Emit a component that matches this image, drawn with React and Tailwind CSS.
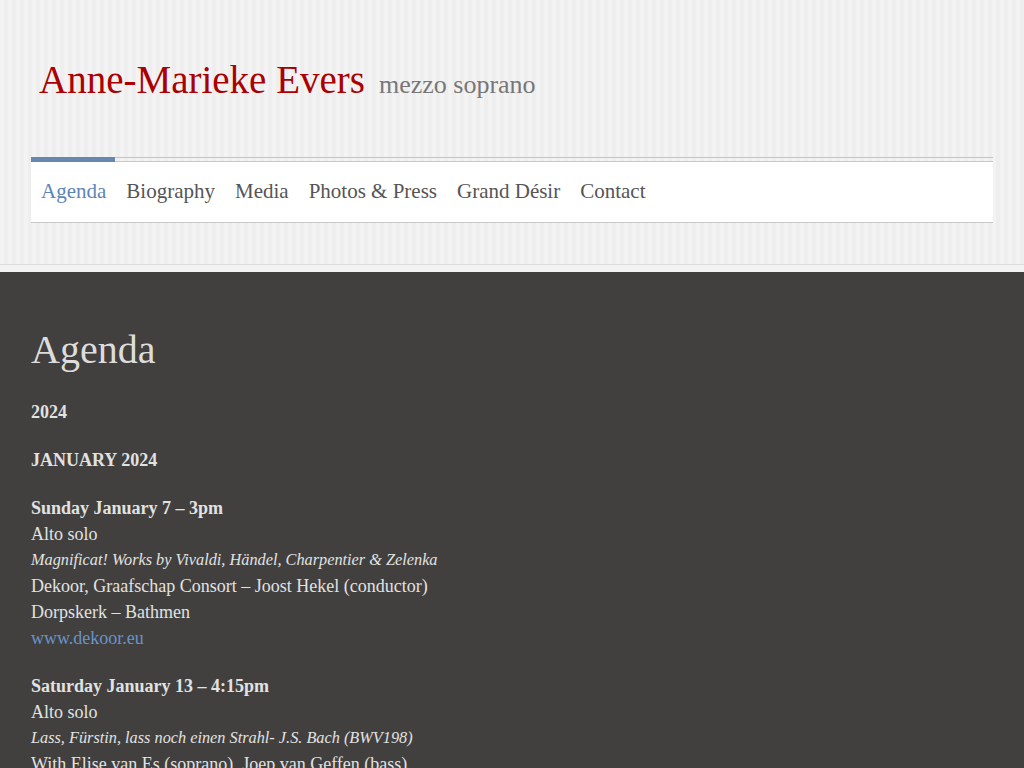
import React from "react";

const serif = { fontFamily: '"Liberation Serif", "Times New Roman", serif' };

function Event({ head, lines }) {
  return (
    <div className="mb-[22px]">
      <div className="font-bold">{head}</div>
      {lines.map((l, i) => (
        <div key={i} className={l.italic ? "italic text-[16.3px]" : l.link ? "text-[#6a93c9]" : ""}>
          {l.t}
        </div>
      ))}
    </div>
  );
}

export default function App() {
  const nav = ["Agenda", "Biography", "Media", "Photos & Press", "Grand Désir", "Contact"];
  return (
    <div className="min-h-[768px] bg-[#41403e]" style={serif}>
      <header className="bg-[repeating-linear-gradient(90deg,#f3f3f3_0px,#f3f3f3_4px,#eeeeee_4px,#eeeeee_8px)] px-[31px] pt-[56px] h-[265px] border-b border-[#dcdcdc]">
        <h1 className="flex items-baseline pl-[8px] leading-[48px]">
          <span className="text-[39px] text-[#aa0000]">Anne-Marieke Evers</span>
          <span className="ml-[14px] text-[26px] text-[#777777]">mezzo soprano</span>
        </h1>
        <nav className="relative mt-[48px] border-t border-[#c4c4c4] pt-[3px]">
          <div className="absolute left-0 top-[-1px] h-[5px] w-[84px] bg-[#6688b0]" />
          <ul className="flex h-[62px] items-center border-t border-b border-[#c8c8c8] bg-white">
            {nav.map((n, i) => (
              <li key={n} className={"px-[10px] text-[21px] " + (i === 0 ? "text-[#5d84b6]" : "text-[#555555]")}>
                {n}
              </li>
            ))}
          </ul>
        </nav>
      </header>
      <div className="h-[7px] bg-[#f2f2f2]" />
      <main className="px-[31px] pt-[54px] text-[18px] leading-[26px] text-[#e2e2e2]">
        <h2 className="mb-[25px] text-[40px] leading-[48px] text-[#dddddd]">Agenda</h2>
        <p className="mb-[22px] font-bold">2024</p>
        <p className="mb-[22px] font-bold">JANUARY 2024</p>
        <Event
          head="Sunday January 7 – 3pm"
          lines={[
            { t: "Alto solo" },
            { t: "Magnificat! Works by Vivaldi, Händel, Charpentier & Zelenka", italic: true },
            { t: "Dekoor, Graafschap Consort – Joost Hekel (conductor)" },
            { t: "Dorpskerk – Bathmen" },
            { t: "www.dekoor.eu", link: true },
          ]}
        />
        <Event
          head="Saturday January 13 – 4:15pm"
          lines={[
            { t: "Alto solo" },
            { t: "Lass, Fürstin, lass noch einen Strahl- J.S. Bach (BWV198)", italic: true },
            { t: "With Elise van Es (soprano), Joep van Geffen (bass)" },
          ]}
        />
      </main>
    </div>
  );
}
